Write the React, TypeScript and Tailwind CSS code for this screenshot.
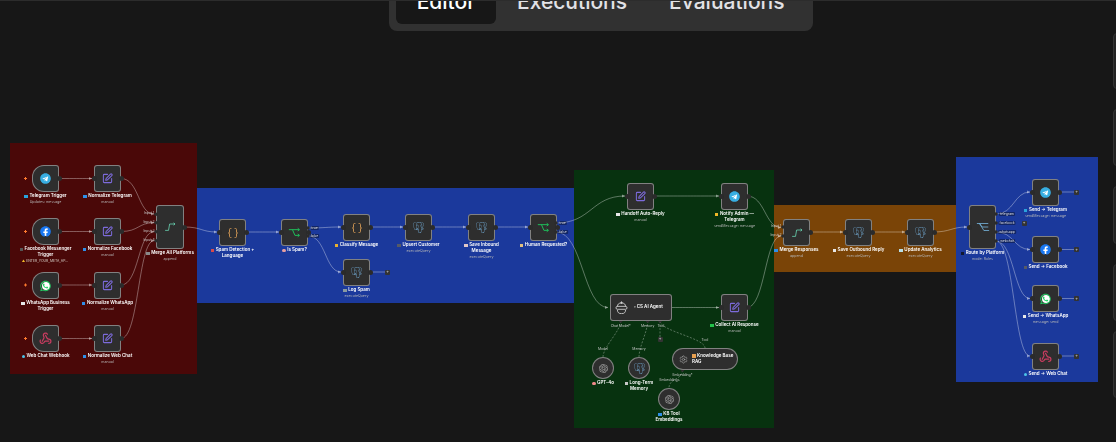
import { Braces, Settings, SquarePen, Webhook } from 'lucide-react'
import { FaFacebook, FaTelegram, FaWhatsapp } from 'react-icons/fa'
import { SiOpenai, SiPostgresql } from 'react-icons/si'

type NodeItem = {
  x: number
  y: number
  w?: number
  h?: number
  icon: string
  label?: string[]
  mark?: string
  sub?: string
  shape?: 'trigger' | 'circle'
}

const stickies = [
  { x: 10, y: 143, w: 187, h: 231, cls: 'bg-[#4a0808]' },
  { x: 197, y: 188, w: 378, h: 115, cls: 'bg-[#1b399c]' },
  { x: 574, y: 170, w: 200, h: 258, cls: 'bg-[#07320f]' },
  { x: 774, y: 205, w: 182, h: 67, cls: 'bg-[#7a4407]' },
  { x: 956, y: 157, w: 142, h: 225, cls: 'bg-[#1b399c]' },
]

const nodes: NodeItem[] = [
  // intake
  { x: 32, y: 165, icon: 'telegram', shape: 'trigger', label: ['Telegram Trigger'], mark: 'bg-[#2aa3dc]', sub: 'Updates: message' },
  { x: 94, y: 165, icon: 'edit', label: ['Normalize Telegram'], mark: 'bg-[#2f8fe8]', sub: 'manual' },
  { x: 32, y: 218, icon: 'facebook', shape: 'trigger', label: ['Facebook Messenger', 'Trigger'], mark: 'bg-[#555555]' },
  { x: 94, y: 218, icon: 'edit', label: ['Normalize Facebook'], mark: 'bg-[#2f8fe8]', sub: 'manual' },
  { x: 32, y: 272, icon: 'whatsapp', shape: 'trigger', label: ['WhatsApp Business', 'Trigger'], mark: 'bg-[#e8e8e8]' },
  { x: 94, y: 272, icon: 'edit', label: ['Normalize WhatsApp'], mark: 'bg-[#2f8fe8]', sub: 'manual' },
  { x: 32, y: 325, icon: 'webhook', shape: 'trigger', label: ['Web Chat Webhook'], mark: 'bg-[#4cc3e8] rounded-full' },
  { x: 94, y: 325, icon: 'edit', label: ['Normalize Web Chat'], mark: 'bg-[#2f8fe8]', sub: 'manual' },
  { x: 156, y: 205, w: 28, h: 44, icon: 'merge', label: ['Merge All Platforms'], mark: 'bg-[#8a8a8a]', sub: 'append' },
  // spam + storage
  { x: 219, y: 219, icon: 'code', label: ['Spam Detection +', 'Language'], mark: 'bg-[#d84a4a]' },
  { x: 281, y: 219, icon: 'if', label: ['Is Spam?'], mark: 'bg-[#e8a0a0] rounded-full' },
  { x: 343, y: 214, icon: 'code', label: ['Classify Message'], mark: 'bg-[#e8b030]' },
  { x: 343, y: 259, icon: 'postgres', label: ['Log Spam'], mark: 'bg-[#8a9aa0]', sub: 'executeQuery' },
  { x: 405, y: 214, icon: 'postgres', label: ['Upsert Customer'], mark: 'bg-[#555a66]', sub: 'executeQuery' },
  { x: 468, y: 214, icon: 'postgres', label: ['Save Inbound', 'Message'], mark: 'bg-[#e0c8c8]', sub: 'executeQuery' },
  { x: 530, y: 214, icon: 'if', label: ['Human Requested?'], mark: 'bg-[#e0c080]' },
  // handoff + agent
  { x: 627, y: 183, icon: 'edit', label: ['Handoff Auto-Reply'], mark: 'bg-[#e8e8e8]', sub: 'manual' },
  { x: 721, y: 183, icon: 'telegram', label: ['Notify Admin —', 'Telegram'], mark: 'bg-[#f0b828]', sub: 'sendMessage: message' },
  { x: 721, y: 294, icon: 'edit', label: ['Collect AI Response'], mark: 'bg-[#22c24a]', sub: 'manual' },
  { x: 592, y: 357, w: 22, h: 22, icon: 'openai', shape: 'circle', label: ['GPT-4o'], mark: 'bg-[#f08a8a] rounded-full' },
  { x: 628, y: 357, w: 22, h: 22, icon: 'postgres', shape: 'circle', label: ['Long-Term', 'Memory'], mark: 'bg-[#c8c8c8]' },
  { x: 658, y: 388, w: 22, h: 22, icon: 'openai', shape: 'circle', label: ['KB Tool', 'Embeddings'], mark: 'bg-[#2f8fe8]' },
  // outbound
  { x: 783, y: 219, icon: 'merge', label: ['Merge Responses'], mark: 'bg-[#2f8fe8]', sub: 'append' },
  { x: 845, y: 219, icon: 'postgres', label: ['Save Outbound Reply'], mark: 'bg-[#e8e8e8]', sub: 'executeQuery' },
  { x: 907, y: 219, icon: 'postgres', label: ['Update Analytics'], mark: 'bg-[#b8e0e8]', sub: 'executeQuery' },
  { x: 969, y: 205, w: 27, h: 44, icon: 'switch', label: ['Route by Platform'], mark: 'bg-[#101830]', sub: 'mode: Rules' },
  { x: 1032, y: 179, icon: 'telegram', label: ['Send → Telegram'], mark: 'bg-[#2aa3dc]', sub: 'sendMessage: message' },
  { x: 1032, y: 236, icon: 'facebook', label: ['Send → Facebook'], mark: 'bg-[#555a66]' },
  { x: 1032, y: 285, icon: 'whatsapp', label: ['Send → WhatsApp'], mark: 'bg-[#e8e8e8]', sub: 'message: send' },
  { x: 1032, y: 343, icon: 'webhook', label: ['Send → Web Chat'], mark: 'bg-[#4cc3e8] rounded-full' },
]

// [x1, y1, x2, y2]
const edges: number[][] = [
  [59, 178.5, 94, 178.5],
  [59, 231.5, 94, 231.5],
  [59, 285, 94, 285],
  [59, 338.5, 94, 338.5],
  [121, 178.5, 156, 214],
  [121, 231.5, 156, 222.7],
  [121, 285, 156, 231.7],
  [121, 338.5, 156, 240.7],
  [184, 227, 219, 232],
  [245, 232, 281, 232],
  [308, 228, 343, 227],
  [308, 236, 343, 272],
  [370, 227, 405, 227],
  [432, 227, 468, 227],
  [494, 227, 530, 227],
  [556, 223, 627, 196],
  [556, 232, 610, 307.5],
  [654, 196, 721, 196],
  [747, 196, 783, 227.5],
  [671, 307.5, 721, 307.5],
  [747, 307.5, 783, 236],
  [809, 232, 845, 232],
  [871, 232, 907, 232],
  [933, 232, 969, 227],
  [996, 214, 1032, 192],
  [996, 232, 1032, 249.5],
  [996, 241, 1032, 298.5],
  [996, 241, 1032, 356],
]

// stubs that end in a plus button
const stubs: number[][] = [
  [370, 272, 385],
  [1058, 192, 1074],
  [1058, 249.5, 1074],
  [1058, 298.5, 1074],
  [1058, 356, 1074],
]

const dashed: number[][] = [
  [620.7, 321, 603, 357],
  [647.7, 321, 639, 357],
  [660, 321, 705, 348],
  [660, 321, 660, 337],
  [682.5, 370, 669, 388],
]

const smallText = [
  { x: 149, y: 214.3, t: 'Input 1' },
  { x: 149, y: 222.7, t: 'Input 2' },
  { x: 149, y: 231.7, t: 'Input 3' },
  { x: 149, y: 240.7, t: 'Input 4' },
  { x: 776, y: 227, t: 'Input 1' },
  { x: 776, y: 236, t: 'Input 2' },
  { x: 620.7, y: 326.5, t: 'Chat Model*' },
  { x: 647.7, y: 326.5, t: 'Memory' },
  { x: 661, y: 326.5, t: 'Tool' },
  { x: 603, y: 350, t: 'Model' },
  { x: 639, y: 350, t: 'Memory' },
  { x: 705, y: 340.5, t: 'Tool' },
  { x: 682.5, y: 375.7, t: 'Embedding*' },
  { x: 669.5, y: 380.7, t: 'Embeddings' },
]

// output names sitting on a dark chip next to the node
const chips = [
  { x: 314.5, y: 228, t: 'true' },
  { x: 314.5, y: 236, t: 'false' },
  { x: 562.5, y: 223, t: 'true' },
  { x: 563, y: 232, t: 'false' },
  { x: 1007, y: 214, t: 'telegram' },
  { x: 1007, y: 223, t: 'facebook' },
  { x: 1007, y: 232, t: 'whatsapp' },
  { x: 1007, y: 241, t: 'webchat' },
]

const inputDots = [
  [156, 214.3], [156, 222.7], [156, 231.7], [156, 240.7],
  [783, 227], [783, 236],
]
const outputDots = [
  [308, 228], [308, 236], [556, 223], [556, 232],
  [996, 214], [996, 223], [996, 232], [996, 241],
  [620.7, 321], [647.7, 321], [660, 321], [682.5, 370],
]

function BrandIcon({ name }: { name: string }) {
  return (
    <div className="relative flex h-[11px] w-[11px] items-center justify-center">
      <div className="absolute h-[8px] w-[8px] rounded-full bg-white" />
      {name === 'telegram' && <FaTelegram className="relative h-[11px] w-[11px] text-[#37aee2]" />}
      {name === 'facebook' && <FaFacebook className="relative h-[11px] w-[11px] text-[#1877f2]" />}
      {name === 'whatsapp' && <FaWhatsapp className="relative h-[12px] w-[12px] text-[#25d366]" />}
    </div>
  )
}

function NodeIcon({ name }: { name: string }) {
  if (name === 'telegram' || name === 'facebook' || name === 'whatsapp') return <BrandIcon name={name} />
  if (name === 'webhook') return <Webhook className="h-[13px] w-[13px] text-[#c93c60]" strokeWidth={2.2} />
  if (name === 'edit') return <SquarePen className="h-[11px] w-[11px] text-[#7d6bdc]" strokeWidth={2.2} />
  if (name === 'code') return <Braces className="h-[12px] w-[12px] text-[#d59a55]" strokeWidth={1.8} />
  if (name === 'postgres') return <SiPostgresql className="h-[11px] w-[11px] text-[#72a9d2]" />
  if (name === 'openai') return <SiOpenai className="h-[9px] w-[9px] text-[#a8a8a8]" />
  if (name === 'if')
    return (
      <svg viewBox="0 0 16 16" className="h-[13px] w-[13px] text-[#1fc05a]" fill="none" stroke="currentColor" strokeWidth="1.2">
        <path d="M1 4.5h13M12 2.8l2 1.7-2 1.7M5.5 4.5l3 7h5.5M12 9.8l2 1.7-2 1.7" />
      </svg>
    )
  if (name === 'merge')
    return (
      <svg viewBox="0 0 16 16" className="h-[12px] w-[12px] text-[#6ee0bc]" fill="none" stroke="currentColor" strokeWidth="1">
        <path d="M1.5 12.5h4.5L7.5 4h7M12.8 2.4l1.9 1.6-1.9 1.6" />
      </svg>
    )
  if (name === 'switch')
    return (
      <svg viewBox="0 0 16 16" className="h-[14px] w-[14px] text-[#78b8e0]" fill="none" stroke="currentColor" strokeWidth="0.9">
        <path d="M1 4h13M4 4l3 4h7M4 4l5 8h6" />
      </svg>
    )
  if (name === 'agent')
    return (
      <svg viewBox="0 0 16 16" className="h-[13px] w-[13px] text-[#dcdcdc]" fill="none" stroke="currentColor" strokeWidth="1">
        <path d="M8 .8v1.6M3 7a5 4.6 0 0 1 10 0M3 11a5 4.6 0 0 0 10 0" />
        <rect x="1.2" y="6.6" width="13.6" height="3.6" rx="1.8" />
        <circle cx="8" cy="2.2" r=".9" />
      </svg>
    )
  return <Settings className="h-[9px] w-[9px] text-[#b0b0b0]" strokeWidth={1.5} />
}

function FlowNode({ node }: { node: NodeItem }) {
  const w = node.w ?? 27
  const h = node.h ?? 27
  const shape =
    node.shape === 'trigger'
      ? 'rounded-l-[12px] rounded-r-[3px]'
      : node.shape === 'circle'
        ? 'rounded-full'
        : 'rounded-[3px]'
  const isSide = node.shape !== 'circle'
  return (
    <>
      <div
        className={`absolute flex items-center justify-center border border-white/40 bg-[#2e2e2e] ${shape}`}
        style={{ left: node.x, top: node.y, width: w, height: h }}
      >
        <NodeIcon name={node.icon} />
      </div>
      {isSide && node.x !== 969 && (
        <div
          className="absolute h-[5px] w-[5px] rounded-full bg-[#2b2b2b]"
          style={{ left: node.x + w - 2.5, top: node.y + h / 2 - 2.5 }}
        />
      )}
      {isSide && node.shape !== 'trigger' && node.x !== 156 && node.x !== 783 && (
        <div
          className="absolute h-[5px] w-[5px] rounded-full bg-[#2b2b2b]"
          style={{ left: node.x - 2.5, top: node.y + h / 2 - 2.5 }}
        />
      )}
      <div
        className="absolute flex w-[70px] flex-col items-center text-center font-['Inter',sans-serif]"
        style={{ left: node.x + w / 2 - 35, top: node.y + h + 1.5 }}
      >
        {node.label?.map((line, i) => (
          <div key={line} className="flex h-[5.8px] items-center gap-[1.5px] whitespace-nowrap text-[4.5px] font-semibold leading-[6px] text-white">
            {i === 0 && node.mark && <span className={`inline-block h-[3.5px] w-[3.5px] ${node.mark}`} />}
            {line}
          </div>
        ))}
        {node.sub && <div className="mt-[1px] whitespace-nowrap text-[3.6px] leading-[5px] text-[#b8b8b8]">{node.sub}</div>}
      </div>
    </>
  )
}

function PlusButton({ x, y }: { x: number; y: number }) {
  return (
    <div
      className="absolute flex h-[5px] w-[5px] items-center justify-center rounded-[1px] bg-[#333333] text-[4px] font-bold leading-none text-[#bbbbbb]"
      style={{ left: x, top: y - 2.5 }}
    >
      +
    </div>
  )
}

export default function App() {
  return (
    <div className="relative h-[442px] w-[1116px] overflow-hidden border-t border-[#2c2c2c] bg-[#171717] font-['Inter',sans-serif]">
      <div className="absolute inset-0 -top-px blur-[0.3px]">
        {stickies.map((s) => (
          <div key={s.x} className={`absolute ${s.cls}`} style={{ left: s.x, top: s.y, width: s.w, height: s.h }} />
        ))}

        <svg className="absolute left-0 top-0" width={1116} height={442} fill="none">
          {edges.map(([x1, y1, x2, y2], i) => {
            const dx = Math.max(18, (x2 - x1) * 0.5)
            return (
              <g key={i}>
                <path
                  d={`M${x1} ${y1}C${x1 + dx} ${y1} ${x2 - dx} ${y2} ${x2 - 2} ${y2}`}
                  stroke="#ffffff"
                  strokeOpacity="0.38"
                  strokeWidth="0.9"
                />
                <path d={`M${x2 - 2} ${y2}l-3 -1.6v3.2z`} fill="#ffffff" fillOpacity="0.45" />
              </g>
            )
          })}
          {stubs.map(([x1, y, x2], i) => (
            <path key={i} d={`M${x1} ${y}H${x2}`} stroke="#ffffff" strokeOpacity="0.38" strokeWidth="0.9" />
          ))}
          {dashed.map(([x1, y1, x2, y2], i) => (
            <path
              key={i}
              d={`M${x1} ${y1}C${x1} ${y1 + 10} ${x2} ${y2 - 10} ${x2} ${y2}`}
              stroke="#ffffff"
              strokeOpacity="0.4"
              strokeWidth="0.8"
              strokeDasharray="2 1.5"
            />
          ))}
          <path d="M27 178.5h-3M25.5 177v3M27 231.5h-3M25.5 230v3M27 285h-3M25.5 283.5v3M27 338.5h-3M25.5 337v3" stroke="#ff7a2e" strokeWidth="1" />
        </svg>

        {nodes.map((n) => (
          <FlowNode key={`${n.x}-${n.y}`} node={n} />
        ))}

        <svg className="absolute left-0 top-0" width={1116} height={442} fill="none">
          {inputDots.map(([x, y], i) => (
            <circle key={i} cx={x} cy={y} r="1.8" fill="#2b2b2b" />
          ))}
          {outputDots.map(([x, y], i) => (
            <circle key={i} cx={x} cy={y} r="1.8" fill="#2b2b2b" />
          ))}
        </svg>

        {/* CS AI Agent, wide node */}
        <div className="absolute left-[610px] top-[294px] flex h-[27px] w-[62px] items-center gap-[3px] rounded-[3px] border border-white/40 bg-[#2e2e2e] pl-[4px]">
          <NodeIcon name="agent" />
          <span className="whitespace-nowrap pl-[3px] text-[4.5px] font-semibold text-white">▫ CS AI Agent</span>
        </div>

        {/* Knowledge Base, pill node */}
        <div className="absolute left-[672px] top-[348px] flex h-[22px] w-[66px] items-center gap-[4px] rounded-full border border-white/40 bg-[#2e2e2e] pl-[6px]">
          <NodeIcon name="store" />
          <div className="text-[4.5px] font-semibold leading-[5.6px] text-white">
            <div className="flex items-center gap-[1.5px] whitespace-nowrap">
              <span className="inline-block h-[3.5px] w-[3.5px] bg-[#e8a050]" />
              Knowledge Base
            </div>
            <div>RAG</div>
          </div>
        </div>

        {stubs.map(([, y, x2], i) => (
          <PlusButton key={i} x={x2} y={y} />
        ))}
        <PlusButton x={1021.5} y={223} />
        <PlusButton x={657.5} y={339} />

        {smallText.map((s) => (
          <div
            key={`${s.x}-${s.y}-${s.t}`}
            className="absolute -translate-x-1/2 -translate-y-1/2 whitespace-nowrap text-[3.4px] leading-none text-[#c8c8c8]"
            style={{ left: s.x, top: s.y }}
          >
            {s.t}
          </div>
        ))}

        {chips.map((s) => (
          <div
            key={`${s.x}-${s.y}`}
            className="absolute -translate-x-1/2 -translate-y-1/2 whitespace-nowrap rounded-[1px] bg-black/35 px-[1px] text-[3.4px] leading-[4px] text-[#dddddd]"
            style={{ left: s.x, top: s.y }}
          >
            {s.t}
          </div>
        ))}

        <div className="absolute left-[17px] top-[259px] flex w-[56px] items-center justify-center gap-[1px] whitespace-nowrap text-[3.4px] text-[#d8d0c8]">
          <span className="text-[#f0b828]">▲</span> ENTER_YOUR_META_AP...
        </div>
      </div>

      {/* tab switcher, cut off by the top of the window */}
      <div className="absolute left-[389px] top-[-20px] flex h-[50px] w-[424px] items-start rounded-[8px] bg-[#313131] px-[7px] pt-[2px] text-[21px] font-medium text-[#e2e2e6]">
        <div className="flex h-[41px] w-[100px] items-end justify-center rounded-[6px] bg-[#171717] pb-[7px] text-white">Editor</div>
        <div className="flex h-[41px] items-end px-[21px] pb-[7px]">Executions</div>
        <div className="flex h-[41px] items-end px-[21px] pb-[7px]">Evaluations</div>
      </div>

      {/* collapsed panel handles along the right edge */}
      <div className="absolute left-[1113px] top-0 flex h-full flex-col">
        <div className="mt-[32px] h-[56px] w-[6px] rounded-l-[4px] border border-[#333333] bg-[#232323]" />
        <div className="mt-[20px] h-[57px] w-[6px] rounded-l-[4px] border border-[#333333] bg-[#232323]" />
        <div className="mt-[20px] h-[58px] w-[6px] rounded-l-[4px] border border-[#333333] bg-[#232323]" />
        <div className="mt-[20px] h-[57px] w-[6px] rounded-l-[4px] border border-[#333333] bg-[#232323]" />
        <div className="mt-[10px] h-[67px] w-[6px] rounded-l-[4px] border border-[#333333] bg-[#232323]" />
      </div>
    </div>
  )
}
